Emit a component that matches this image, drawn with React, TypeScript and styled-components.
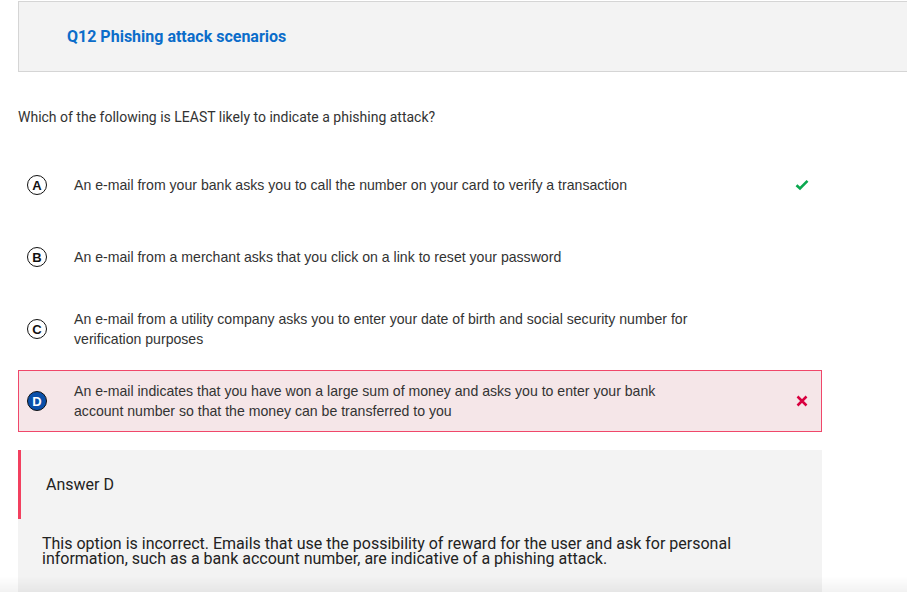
import React from "react";
import styled, { createGlobalStyle } from "styled-components";

const GlobalStyle = createGlobalStyle`
  html, body {
    margin: 0;
    padding: 0;
    background: #ffffff;
    overflow: hidden;
  }
`;

const Page = styled.div`
  width: 907px;
  height: 592px;
  overflow: hidden;
  padding: 1px 0 0 18px;
  box-sizing: border-box;
  font-family: Roboto, "Liberation Sans", sans-serif;
`;

const Header = styled.div`
  display: flex;
  align-items: center;
  height: 71px;
  width: 920px;
  box-sizing: border-box;
  background: #f3f3f3;
  border: 1px solid #d5d5d5;
  padding-left: 48px;
`;

const Title = styled.h2`
  margin: 0;
  font-family: Roboto, sans-serif;
  font-size: 16px;
  font-weight: 700;
  color: #0b6dca;
`;

const Question = styled.p`
  margin: 36px 0 0;
  font-size: 14px;
  line-height: 18px;
  color: #333333;
`;

const Options = styled.div`
  display: flex;
  flex-direction: column;
  gap: 10px;
  width: 804px;
  margin-top: 28px;
`;

const Option = styled.div<{ $wrong?: boolean }>`
  display: flex;
  align-items: center;
  height: 62px;
  box-sizing: border-box;
  padding: 0 11px 0 8px;
  border: 1px solid ${(p) => (p.$wrong ? "#f0476a" : "transparent")};
  background: ${(p) => (p.$wrong ? "#f5e6e8" : "transparent")};
`;

const Letter = styled.span<{ $selected?: boolean }>`
  flex: none;
  width: 20px;
  height: 20px;
  box-sizing: border-box;
  border-radius: 50%;
  border: 1.5px solid #111111;
  background: ${(p) => (p.$selected ? "#0a50aa" : "#ffffff")};
  color: ${(p) => (p.$selected ? "#ffffff" : "#111111")};
  display: flex;
  align-items: center;
  justify-content: center;
  font-family: "Liberation Sans", Arial, sans-serif;
  font-weight: 700;
  font-size: 13px;
  margin-right: 27px;
`;

const OptionText = styled.span`
  flex: 1;
  font-family: "Liberation Sans", Arial, sans-serif;
  font-size: 14.1px;
  line-height: 20px;
  color: #333333;
  max-width: 625px;
`;

const Mark = styled.span`
  margin-left: auto;
  width: 16px;
  height: 16px;
  display: flex;
  align-items: center;
  justify-content: center;
`;

const AnswerBox = styled.div`
  width: 804px;
  margin-top: 18px;
  background: #f3f3f3;
  padding-bottom: 40px;
`;

const AnswerHead = styled.div`
  height: 69px;
  display: flex;
  align-items: center;
  border-left: 3px solid #f2405f;
  padding-left: 25px;
  font-size: 16px;
  color: #222222;
`;

const Explanation = styled.p`
  margin: 17px 0 0 24px;
  max-width: 720px;
  font-size: 16px;
  line-height: 15px;
  color: #222222;
`;

const BottomShade = styled.div`
  position: fixed;
  left: 0;
  right: 0;
  bottom: 0;
  height: 16px;
  background: linear-gradient(to bottom, rgba(0, 0, 0, 0), rgba(0, 0, 0, 0.05));
  pointer-events: none;
`;

const Check = () => (
  <svg width="14" height="12" viewBox="0 0 14 12">
    <path d="M1.5 6.2 L5 9.5 L12.5 1.8" fill="none" stroke="#0aa84f" strokeWidth="2.6" />
  </svg>
);

const Cross = () => (
  <svg width="12" height="12" viewBox="0 0 12 12">
    <path d="M1.5 1.5 L10.5 10.5 M10.5 1.5 L1.5 10.5" fill="none" stroke="#d8003f" strokeWidth="2.5" />
  </svg>
);

const options = [
  {
    key: "A",
    text: "An e-mail from your bank asks you to call the number on your card to verify a transaction",
    correct: true,
  },
  {
    key: "B",
    text: "An e-mail from a merchant asks that you click on a link to reset your password",
  },
  {
    key: "C",
    text: "An e-mail from a utility company asks you to enter your date of birth and social security number for verification purposes",
  },
  {
    key: "D",
    text: "An e-mail indicates that you have won a large sum of money and asks you to enter your bank account number so that the money can be transferred to you",
    wrong: true,
  },
];

export default function App() {
  return (
    <>
      <GlobalStyle />
      <Page>
        <Header>
          <Title>Q12 Phishing attack scenarios</Title>
        </Header>
        <Question>Which of the following is LEAST likely to indicate a phishing attack?</Question>
        <Options>
          {options.map((o) => (
            <Option key={o.key} $wrong={o.wrong}>
              <Letter $selected={o.wrong}>{o.key}</Letter>
              <OptionText>{o.text}</OptionText>
              {o.correct && (
                <Mark>
                  <Check />
                </Mark>
              )}
              {o.wrong && (
                <Mark>
                  <Cross />
                </Mark>
              )}
            </Option>
          ))}
        </Options>
        <AnswerBox>
          <AnswerHead>Answer D</AnswerHead>
          <Explanation>
            This option is incorrect. Emails that use the possibility of reward for the user and ask for personal
            information, such as a bank account number, are indicative of a phishing attack.
          </Explanation>
        </AnswerBox>
      </Page>
      <BottomShade />
    </>
  );
}
